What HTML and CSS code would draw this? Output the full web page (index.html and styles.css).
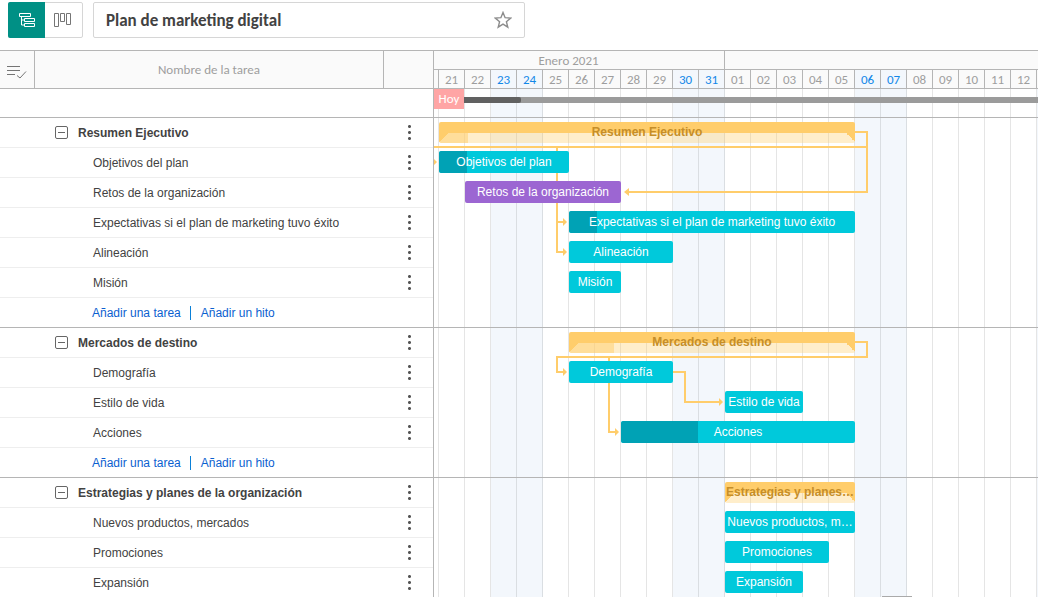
FILE: index.html
```html
<!DOCTYPE html>
<html lang="es">
<head>
<meta charset="utf-8">
<title>Plan de marketing digital</title>
<link rel="stylesheet" href="styles.css">
</head>
<body>
<div class="app">
  <header class="toolbar">
    <div class="views">
      <button class="view view-active" type="button" aria-label="Vista Gantt">
        <svg width="18" height="16" viewBox="0 0 18 16"><path d="M1.500 1.500h11v3h-11zM6.500 6.500h10v3h-10zM6.500 11.500h10v3h-10zM3.500 4.500v8.500h3M3.500 8h3"/></svg>
      </button>
      <button class="view" type="button" aria-label="Vista de tablero">
        <svg width="18" height="16" viewBox="0 0 18 16"><path d="M.5 1.500h4v13h-4zM6.500 1.500h4v8h-4zM12.500 1.500h4v11h-4z"/></svg>
      </button>
    </div>
    <div class="title-box">
      <h1 class="title">Plan de marketing digital</h1>
      <button class="star" type="button" aria-label="Favorito">
        <svg width="18" height="18" viewBox="0 0 18 18"><path d="M9 1.500l2.100 5.200 5.600.4-4.300 3.600 1.400 5.500L9 13.200l-4.800 3 1.400-5.500L1.300 7.100l5.600-.4z"/></svg>
      </button>
    </div>
  </header>

  <main class="gantt">
    <table class="tasks">
      <colgroup><col class="col-mark"><col class="col-name"><col class="col-menu"></colgroup>
      <thead>
        <tr class="head">
          <th><button class="mark" type="button" aria-label="Selección múltiple"><svg width="20" height="14" viewBox="0 0 20 14"><path d="M0 1.500h13M0 5.500h13M0 9.500h8M10 10.500l3 2.500 6-6.500"/></svg></button></th>
          <th>Nombre de la tarea</th>
          <th></th>
        </tr>
      </thead>
      <tbody>
        <tr class="total"><td colspan="3"></td></tr>
        <tr class="group"><td></td><td><button class="fold" type="button" aria-label="Contraer"></button>Resumen Ejecutivo</td><td><button class="menu" type="button" aria-label="Opciones"></button></td></tr>
        <tr><td></td><td>Objetivos del plan</td><td><button class="menu" type="button" aria-label="Opciones"></button></td></tr>
        <tr><td></td><td>Retos de la organización</td><td><button class="menu" type="button" aria-label="Opciones"></button></td></tr>
        <tr><td></td><td>Expectativas si el plan de marketing tuvo éxito</td><td><button class="menu" type="button" aria-label="Opciones"></button></td></tr>
        <tr><td></td><td>Alineación</td><td><button class="menu" type="button" aria-label="Opciones"></button></td></tr>
        <tr><td></td><td>Misión</td><td><button class="menu" type="button" aria-label="Opciones"></button></td></tr>
        <tr class="add"><td></td><td><a href="#tarea">Añadir una tarea</a><a href="#hito">Añadir un hito</a></td><td></td></tr>
        <tr class="group"><td></td><td><button class="fold" type="button" aria-label="Contraer"></button>Mercados de destino</td><td><button class="menu" type="button" aria-label="Opciones"></button></td></tr>
        <tr><td></td><td>Demografía</td><td><button class="menu" type="button" aria-label="Opciones"></button></td></tr>
        <tr><td></td><td>Estilo de vida</td><td><button class="menu" type="button" aria-label="Opciones"></button></td></tr>
        <tr><td></td><td>Acciones</td><td><button class="menu" type="button" aria-label="Opciones"></button></td></tr>
        <tr class="add"><td></td><td><a href="#tarea">Añadir una tarea</a><a href="#hito">Añadir un hito</a></td><td></td></tr>
        <tr class="group"><td></td><td><button class="fold" type="button" aria-label="Contraer"></button>Estrategias y planes de la organización</td><td><button class="menu" type="button" aria-label="Opciones"></button></td></tr>
        <tr><td></td><td>Nuevos productos, mercados</td><td><button class="menu" type="button" aria-label="Opciones"></button></td></tr>
        <tr><td></td><td>Promociones</td><td><button class="menu" type="button" aria-label="Opciones"></button></td></tr>
        <tr><td></td><td>Expansión</td><td><button class="menu" type="button" aria-label="Opciones"></button></td></tr>
      </tbody>
    </table>

    <section class="timeline" aria-label="Cronograma">
      <div class="calendar">
        <div class="months"><div class="month">Enero 2021</div></div>
        <div class="days">
          <span class="day"></span><span class="day">21</span><span class="day">22</span><span class="day weekend">23</span><span class="day weekend">24</span><span class="day">25</span><span class="day">26</span><span class="day">27</span><span class="day">28</span><span class="day">29</span><span class="day weekend">30</span><span class="day weekend">31</span><span class="day">01</span><span class="day">02</span><span class="day">03</span><span class="day">04</span><span class="day">05</span><span class="day weekend">06</span><span class="day weekend">07</span><span class="day">08</span><span class="day">09</span><span class="day">10</span><span class="day">11</span><span class="day">12</span><span class="day"></span>
        </div>
      </div>
      <div class="overview">
        <span class="today">Hoy</span>
        <div class="project"><div class="project-done"></div></div>
      </div>
      <div class="chart">
        <svg class="links" width="620" height="480" viewBox="434 118 620 480">
          <path class="link" d="M855 132h12v60H628M867 147H434M557 147v105h6M557 222h6M855 342h12v15H557v15h6M609 357v75h6M673 372h12v30h34"/>
          <path class="tip" d="M624 192l5-4v8zM437 162l-4-4v8zM567 222l-4-4v8zM567 252l-4-4v8zM567 372l-4-4v8zM619 432l-4-4v8zM723 402l-4-4v8z"/>
          <path class="edge" d="M882 596h30v2h-30z"/>
        </svg>
        <div class="rows">
          <div class="row"><div class="bar summary" style="grid-column:2/span 16"><i class="done" style="width:29px"></i><b class="label">Resumen Ejecutivo</b></div></div>
          <div class="row"><div class="bar" style="grid-column:2/span 5"><i class="done" style="width:28px"></i><span class="label">Objetivos del plan</span></div></div>
          <div class="row"><div class="bar violet" style="grid-column:3/span 6"><span class="label">Retos de la organización</span></div></div>
          <div class="row"><div class="bar" style="grid-column:7/span 11"><i class="done" style="width:28px"></i><span class="label">Expectativas si el plan de marketing tuvo éxito</span></div></div>
          <div class="row"><div class="bar" style="grid-column:7/span 4"><span class="label">Alineación</span></div></div>
          <div class="row"><div class="bar" style="grid-column:7/span 2"><span class="label">Misión</span></div></div>
          <div class="row last"></div>
          <div class="row"><div class="bar summary" style="grid-column:7/span 11"><i class="done" style="width:45px"></i><b class="label">Mercados de destino</b></div></div>
          <div class="row"><div class="bar" style="grid-column:7/span 4"><span class="label">Demografía</span></div></div>
          <div class="row"><div class="bar" style="grid-column:13/span 3"><span class="label">Estilo de vida</span></div></div>
          <div class="row"><div class="bar" style="grid-column:9/span 9"><i class="done" style="width:77px"></i><span class="label">Acciones</span></div></div>
          <div class="row last"></div>
          <div class="row"><div class="bar summary" style="grid-column:13/span 5"><b class="label">Estrategias y planes…</b></div></div>
          <div class="row"><div class="bar" style="grid-column:13/span 5"><span class="label">Nuevos productos, m…</span></div></div>
          <div class="row"><div class="bar" style="grid-column:13/span 4"><span class="label">Promociones</span></div></div>
          <div class="row"><div class="bar" style="grid-column:13/span 3"><span class="label">Expansión</span></div></div>
        </div>
      </div>
    </section>
  </main>
</div>
</body>
</html>
```
FILE: styles.css
```css
:root {
  --day: 26px;
  --line: #b5b5b5;
  --row: 30px;
  --orange: #ffcd6b;
  --heading: Carlito, Lato, sans-serif;
}
* { box-sizing: border-box; }
html { overflow: hidden; }
body {
  margin: 0;
  background: #fff;
  color: #424242;
  font: 12px/16px "Liberation Sans", Arial, sans-serif;
}
button {
  padding: 0;
  border: 0;
  background: none;
  font: inherit;
  color: inherit;
  cursor: pointer;
}
svg { display: block; }

.app { height: 100vh; overflow: hidden; }

/* Toolbar */
.toolbar {
  display: flex;
  gap: 10px;
  height: 50px;
  padding: 2px 8px 12px;
}
.views { display: flex; border: 1px solid #d6d6d6; border-radius: 2px; }
.view {
  display: grid;
  place-items: center;
  width: 37px;
}
.view + .view { padding-right: 2px; }
.view svg { fill: none; stroke: #757575; }
.view-active { margin: -1px 0 -1px -1px; background: #009085; border-radius: 2px 0 0 2px; }
.view-active svg { stroke: #fff; }
.title-box {
  display: flex;
  align-items: center;
  justify-content: space-between;
  flex: 0 1 432px;
  padding: 0 12px;
  border: 1px solid #d6d6d6;
  border-radius: 2px;
}
.title { margin: 0; padding-top: 2px; font: bold 17px/20px var(--heading); }
.star svg { fill: none; stroke: #8c8c8c; stroke-width: 1.4; }

.gantt { display: flex; align-items: flex-start; }

/* Task list */
.tasks {
  flex: none;
  width: 434px;
  table-layout: fixed;
  border-spacing: 0;
  border-right: 1px solid var(--line);
}
.col-mark { width: 35px; }
.col-menu { width: 49px; }
.tasks th, .tasks td { padding: 0; }
.tasks th {
  height: 39px;
  border: 1px solid var(--line);
  border-width: 1px 1px 1px 0;
  background: #fafafa;
  color: #9e9e9e;
  font: 13px/16px var(--heading);
}
.tasks th:last-child { border-right: 0; }
.mark { display: block; margin: 4px 0 0 7px; }
.mark svg { fill: none; stroke: #757575; }
.tasks td {
  height: var(--row);
  border-bottom: 1px solid #eee;
  white-space: nowrap;
}
.tasks td:nth-child(2) { padding-left: 58px; }
.tasks .group td:nth-child(2) { padding-left: 20px; font-weight: bold; }
.tasks .total td { height: 29px; border-color: var(--line); }
.tasks .add td { border-color: var(--line); }
.tasks .add td:nth-child(2) { padding-left: 57px; }
.add a { color: #0b5fd0; text-decoration: none; }
.add a + a { margin-left: 9px; padding-left: 10px; border-left: 1px solid #0a80d8; }
.fold {
  width: 13px;
  height: 13px;
  margin-right: 10px;
  border: 1px solid #666;
  border-radius: 2px;
  background: linear-gradient(#666, #666) center / 7px 1px no-repeat;
  vertical-align: -1px;
}
.menu {
  display: block;
  width: 3px;
  height: 15px;
  margin-left: 24px;
  background: radial-gradient(circle at 50% 25%, #555 1px, transparent 2px) 0 0 / 3px 6px;
}

/* Timeline */
.timeline { flex: 1; min-width: 0; overflow: hidden; }
.calendar {
  border: 1px solid var(--line);
  border-width: 1px 0;
  background: #fafafa;
  color: #9e9e9e;
  font: 13px/19px var(--heading);
  text-align: center;
}
.months { display: flex; height: 19px; border-bottom: 1px solid var(--line); }
.month {
  flex: none;
  width: calc(12 * var(--day));
  margin-left: -21px;
  border-right: 1px solid var(--line);
}
.days { display: flex; height: 18px; margin-left: -21px; }
.day { flex: none; width: var(--day); border-right: 1px solid var(--line); line-height: 20px; }
.weekend { background: #f3f7fc; color: #1287e8; }

.overview, .chart {
  --grid: repeating-linear-gradient(90deg, transparent 0 25px, #0000001a 25px 26px);
  --weekends: repeating-linear-gradient(90deg, transparent 0 78px, #f3f7fc 78px 130px, transparent 130px 182px);
  background: var(--grid) -21px 0 / 1820px 100%, var(--weekends) -21px 0 / 1820px 100%;
}
.overview { display: flex; height: 29px; border-bottom: 1px solid var(--line); }
.today {
  width: 30px;
  height: 20px;
  background: #ffa5a5;
  color: #fff;
  font: 13px/19px var(--heading);
  text-align: center;
}
.project { flex: 1; height: 6px; margin-top: 8px; background: #9b9b9b; }
.project-done { width: 57px; height: 6px; border-radius: 0 2px 2px 0; background: #616161; }

.chart { position: relative; }
.links { position: absolute; top: 0; left: 0; }
.link { fill: none; stroke: var(--orange); stroke-width: 2; }
.tip { fill: var(--orange); }
.edge { fill: #aaa; }
.rows { position: relative; }
.row {
  display: grid;
  grid-template-columns: repeat(24, var(--day));
  align-items: start;
  height: var(--row);
  margin-left: -21px;
  padding-top: 3px;
}
.last { border-bottom: 1px solid var(--line); }
.bar {
  display: grid;
  height: 22px;
  border-radius: 2px;
  background: #00c9db;
  color: #fff;
  line-height: 22px;
  text-align: center;
  overflow: hidden;
}
.bar > * { grid-area: 1 / 1; }
.done { background: #00a2b5; border-radius: 2px 0 0 2px; }
.label {
  min-width: 0;
  white-space: nowrap;
}
.violet { background: #9c66d2; }
.summary {
  height: 21px;
  margin-top: 1px;
  background:
    linear-gradient(var(--orange), var(--orange)) top / 100% 11px no-repeat,
    linear-gradient(to bottom right, var(--orange) 50%, transparent 50%) left 11px / 9px 9px no-repeat,
    linear-gradient(to bottom left, var(--orange) 50%, transparent 50%) right 11px / 9px 9px no-repeat,
    #ffcd6b59;
  color: #c68e28;
  line-height: 20px;
}
.summary .done { height: 10px; margin-top: 11px; background: #ffcd6b80; }
```
